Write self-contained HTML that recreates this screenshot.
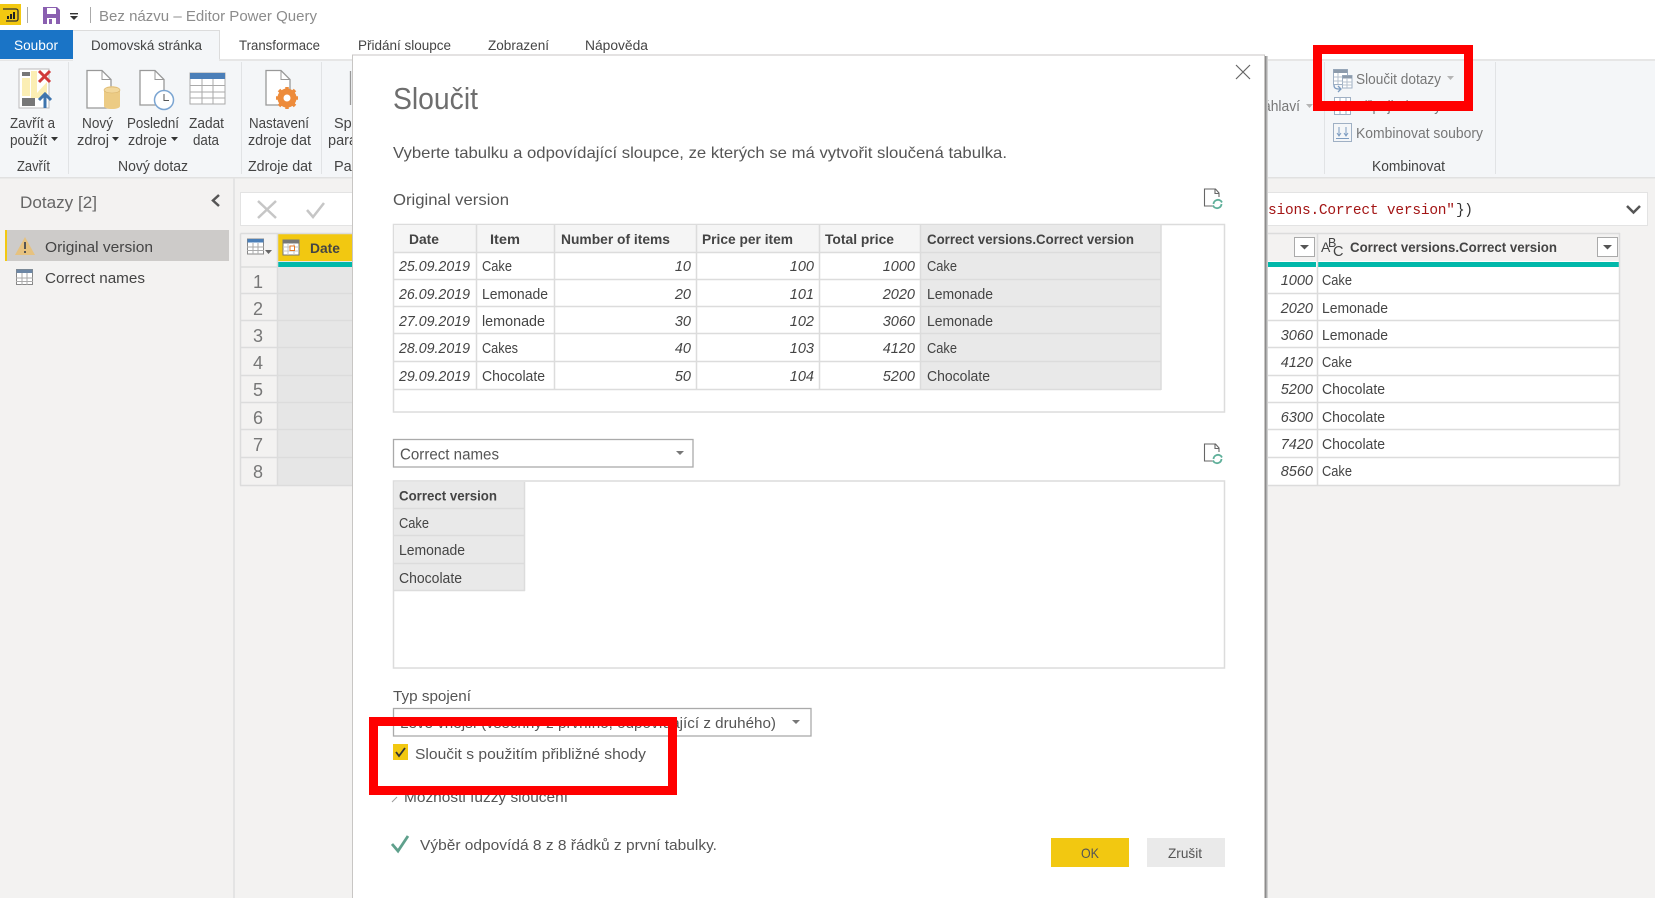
<!DOCTYPE html>
<html lang="cs"><head><meta charset="utf-8"><title>Sloučit</title>
<style>
html,body{margin:0;padding:0;width:1655px;height:898px;overflow:hidden;background:#f3f2f1}
svg{display:block;filter:blur(.35px)}
text{font-family:"Liberation Sans",sans-serif;font-size:14.5px;fill:#444;white-space:pre}
.b{font-weight:bold;font-size:14px;fill:#444}
.i{font-style:italic;font-size:14.5px;fill:#444}
.r{text-anchor:end}
.g{fill:#777}
.n{font-size:18px;fill:#777;text-anchor:middle}
.m{font-family:"Liberation Mono",monospace;font-size:14.5px;fill:#a31515}
.l{stroke:#dcdcdc;stroke-width:1.5;fill:none}
</style></head><body>
<svg width="1655" height="898" viewBox="0 0 1655 898" xmlns="http://www.w3.org/2000/svg">
<rect width="1655" height="898" fill="#f3f2f1"/>
<!-- title bar -->
<rect width="1655" height="59" fill="#fff"/>
<rect x="0" y="4" width="21" height="21" fill="#f2c811"/>
<path d="M3 9h13a2 2 0 0 1 2 2v8a2 2 0 0 1-2 2h-10" fill="none" stroke="#333" stroke-width="1.3"/>
<path d="M7 19v-3h2v3zM10 19v-5h2v5zM13 19v-7h2v7z" fill="#222"/>
<rect x="27" y="7" width="1" height="16" fill="#aaa"/>
<path d="M43 7h14l3 3v14H43z" fill="#8a5fb0"/><rect x="47" y="8" width="9" height="6" fill="#fff"/><rect x="47" y="18" width="9" height="6" fill="#fff"/><rect x="49" y="19" width="3" height="5" fill="#8a5fb0"/>
<rect x="70" y="13" width="8" height="1.4" fill="#333"/><path d="M70 16h8l-4 4z" fill="#333"/>
<rect x="90" y="7" width="1" height="16" fill="#aaa"/>
<text x="99" y="21" textLength="218" lengthAdjust="spacingAndGlyphs" style="font-size:15px;fill:#8c8c8c">Bez názvu – Editor Power Query</text>
<!-- tabs -->
<rect x="0" y="30" width="73" height="29" fill="#1a74c6"/>
<text x="14" y="50" textLength="44" lengthAdjust="spacingAndGlyphs" style="fill:#fff;font-size:13.5px">Soubor</text>
<rect x="73" y="30" width="146" height="31" fill="#f4f6f8"/><path d="M73 30.500H219.500V60" fill="none" stroke="#dcdcdc"/>
<text x="91" y="50" textLength="111" lengthAdjust="spacingAndGlyphs" style="font-size:13.500px">Domovská stránka</text>
<text x="239" y="50" textLength="81" lengthAdjust="spacingAndGlyphs" style="font-size:13.5px">Transformace</text>
<text x="358" y="50" textLength="93" lengthAdjust="spacingAndGlyphs" style="font-size:13.5px">Přidání sloupce</text>
<text x="488" y="50" textLength="61" lengthAdjust="spacingAndGlyphs" style="font-size:13.5px">Zobrazení</text>
<text x="585" y="50" textLength="63" lengthAdjust="spacingAndGlyphs" style="font-size:13.5px">Nápověda</text>
<!-- ribbon -->
<rect x="219" y="59" width="1436" height="2" fill="#e6e6e6"/>
<rect x="0" y="60" width="73" height="2" fill="#e6e6e6"/>
<rect x="0" y="61" width="1655" height="116" fill="#f4f6f8"/>
<rect x="73" y="59" width="146" height="3" fill="#f4f6f8"/>
<rect x="0" y="177" width="1655" height="1.500" fill="#e1e1e1"/>
<g fill="#e1e3e5"><rect x="68" y="62" width="1" height="112"/><rect x="241" y="62" width="1" height="112"/><rect x="321" y="62" width="1" height="112"/><rect x="1324" y="62" width="1" height="112"/><rect x="1495" y="62" width="1" height="112"/></g>
<!-- close&apply icon -->
<rect x="19" y="69" width="30" height="39" fill="#fff" stroke="#bbb"/>
<path d="M31 71h6v22l10-11v16H31z" fill="#fbeeb4"/><rect x="22" y="72" width="8" height="4" fill="#777"/><rect x="22" y="98" width="13" height="8" fill="#777"/><rect x="22" y="78" width="8" height="18" fill="#fbeeb4"/>
<path d="M39 71l11 11M50 71L39 82" stroke="#d13a3a" stroke-width="3" fill="none"/>
<path d="M45 108V96M39 100l6-6 6 6" stroke="#3f75ae" stroke-width="3" fill="none"/>
<!-- new -->
<path d="M87 70.500h15l9 9V108H87z" fill="#fff" stroke="#999" stroke-width="1.300"/><path d="M102 70.500v9h9" fill="none" stroke="#999"/>
<path d="M104 90c0-5 16-5 16 0v16c0 4-16 4-16 0z" fill="#eccb84"/><ellipse cx="112" cy="90" rx="8" ry="3" fill="#f2d89d" stroke="#d8b26a" stroke-width=".6"/>
<!-- recent -->
<path d="M140 70.500h15l9 9V105h-24z" fill="#fff" stroke="#999" stroke-width="1.300"/><path d="M155 70.500v9h9" fill="none" stroke="#999"/>
<circle cx="164" cy="100" r="9.500" fill="#fff" stroke="#7ba5d2" stroke-width="1.500"/><path d="M164 94v6.500h5" fill="none" stroke="#555" stroke-width="1"/>
<!-- enter data -->
<rect x="190" y="73" width="35" height="31" fill="#fff" stroke="#aaa"/><rect x="190" y="73" width="35" height="6" fill="#4b7fb8"/>
<path d="M190 85.500h35M190 92h35M190 98h35M202 79v25M213 79v25" stroke="#aaa" fill="none"/>
<!-- settings -->
<path d="M266 70.500h15l9 9V105h-24z" fill="#fff" stroke="#999" stroke-width="1.300"/><path d="M281 70.500v9h9" fill="none" stroke="#999"/>
<circle cx="287" cy="98" r="7" fill="none" stroke="#ed8b3b" stroke-width="5"/>
<path d="M287 87v22M276 98h22M279 90l16 16M295 90l-16 16" stroke="#ed8b3b" stroke-width="3.500" fill="none"/><circle cx="287" cy="98" r="3.500" fill="#fff"/>
<path d="M350.500 71V105" stroke="#999" stroke-width="1.300"/>
<!-- ribbon labels -->
<g style="font-size:14px">
<text x="10" y="128" textLength="45" lengthAdjust="spacingAndGlyphs">Zavřít a</text>
<text x="10" y="145" textLength="37" lengthAdjust="spacingAndGlyphs">použít</text>
<text x="82" y="128" textLength="31" lengthAdjust="spacingAndGlyphs">Nový</text>
<text x="77" y="145" textLength="32" lengthAdjust="spacingAndGlyphs">zdroj</text>
<text x="127" y="128" textLength="52" lengthAdjust="spacingAndGlyphs">Poslední</text>
<text x="128" y="145" textLength="39" lengthAdjust="spacingAndGlyphs">zdroje</text>
<text x="189" y="128" textLength="35" lengthAdjust="spacingAndGlyphs">Zadat</text>
<text x="193" y="145" textLength="26" lengthAdjust="spacingAndGlyphs">data</text>
<text x="249" y="128" textLength="60" lengthAdjust="spacingAndGlyphs">Nastavení</text>
<text x="248" y="145" textLength="63" lengthAdjust="spacingAndGlyphs">zdroje dat</text>
<text x="334" y="128">Spr</text>
<text x="328" y="145">para</text>
<text x="17" y="171" textLength="33" lengthAdjust="spacingAndGlyphs">Zavřít</text>
<text x="118" y="171" textLength="70" lengthAdjust="spacingAndGlyphs">Nový dotaz</text>
<text x="248" y="171" textLength="64" lengthAdjust="spacingAndGlyphs">Zdroje dat</text>
<text x="334" y="171">Par</text>
<text x="1372" y="171" textLength="73" lengthAdjust="spacingAndGlyphs">Kombinovat</text>
<text x="1263" y="111" textLength="37" lengthAdjust="spacingAndGlyphs" class="g">áhlaví</text>
<text x="1356" y="84" textLength="85" lengthAdjust="spacingAndGlyphs" class="g">Sloučit dotazy</text>
<text x="1356" y="138" textLength="127" lengthAdjust="spacingAndGlyphs" class="g">Kombinovat soubory</text>
<text x="1356" y="111" textLength="85" lengthAdjust="spacingAndGlyphs" class="g">Připojit dotazy</text>
</g>
<g fill="#333"><path d="M51 137h7l-3.500 4zM112 137h7l-3.500 4zM171 137h7l-3.500 4z"/></g>
<g fill="#b5b5b5"><path d="M1447 76h7l-3.500 4zM1306 104h7l-3.500 4z"/></g>
<!-- merge icon -->
<rect x="1333.500" y="69.500" width="14" height="15" fill="#fff" stroke="#9fb0c4"/><rect x="1333.500" y="69.500" width="14" height="3.500" fill="#8d9bab"/>
<path d="M1334 77h8M1334 81h8M1338 73v11" stroke="#b5c0cd"/>
<rect x="1342.500" y="75.500" width="9.500" height="12.500" fill="#fff" stroke="#9fb0c4"/><rect x="1342.500" y="75.500" width="9.500" height="3" fill="#8d9bab"/>
<path d="M1342 82h10M1342 85h10M1347 78v10" stroke="#b5c0cd"/>
<path d="M1334 85c0 3.500 2 4 6 4M1338 86l3 3-3 3" fill="none" stroke="#7d9cc0" stroke-width="1.300"/>
<rect x="1334.500" y="97.500" width="16" height="17" fill="#fff" stroke="#9fb0c4"/><path d="M1334 103h17M1340 97v18M1346 97v18" stroke="#9fb0c4"/>
<rect x="1333.500" y="123.500" width="18" height="18" fill="#f4f6f8" stroke="#9fb0c4"/><path d="M1339 127v9M1337 133l2 3 2-3M1346 127v9M1344 133l2 3 2-3M1336 138.500h13" fill="none" stroke="#7d9cc0"/>
<!-- queries panel -->
<rect x="233" y="178" width="2" height="720" fill="#e4e4e4"/>
<text x="20" y="208" textLength="77" lengthAdjust="spacingAndGlyphs" style="font-size:17px;fill:#666">Dotazy [2]</text>
<path d="M219 195l-6 5.500 6 5.500" fill="none" stroke="#555" stroke-width="2.500"/>
<rect x="5" y="230" width="224" height="31" fill="#cdcbc9"/><rect x="5" y="230" width="2" height="31" fill="#f2c811"/>
<path d="M15 255l10-18 10 18z" fill="#e6c27f"/><rect x="24" y="242" width="2" height="7" fill="#555"/><rect x="24" y="251" width="2" height="2" fill="#555"/>
<text x="45" y="252" textLength="108" lengthAdjust="spacingAndGlyphs" style="font-size:15px">Original version</text>
<rect x="16.500" y="269.500" width="16" height="15" fill="#fff" stroke="#888"/><rect x="16.500" y="269.500" width="16" height="3.500" fill="#6d87a5"/><path d="M16 278h17M16 281.500h17M22 273v12M27 273v12" stroke="#aaa"/>
<text x="45" y="283" textLength="100" lengthAdjust="spacingAndGlyphs" style="font-size:15px">Correct names</text>
<!-- formula bar -->
<rect x="240.500" y="192.500" width="1407" height="33" fill="#fff" stroke="#e3e3e3"/>
<path d="M258 201l18 17M276 201l-18 17" stroke="#c6c6c6" stroke-width="2.500" fill="none"/>
<path d="M307 210l6 7 11-14" stroke="#c6c6c6" stroke-width="2.500" fill="none"/>
<text x="1259.500" y="214" class="m" textLength="195.500" lengthAdjust="spacing">rsions.Correct version"</text>
<text x="1456" y="214" class="m" style="fill:#333" textLength="17" lengthAdjust="spacing">})</text>
<path d="M1627 206l6.500 6.500 6.500-6.500" stroke="#555" stroke-width="2.500" fill="none"/>
<!-- grid -->
<rect x="240" y="233" width="1380" height="252" fill="#fff"/>
<rect x="240" y="233" width="38" height="252" fill="#f3f2f1"/>
<rect x="278" y="261" width="987" height="224" fill="#e6e6e6"/>
<rect x="1265" y="233" width="355" height="28" fill="#f3f2f1"/>
<rect x="278" y="234" width="74" height="27" fill="#f2c811"/>
<rect x="278" y="262" width="74" height="5" fill="#01b8aa"/>
<rect x="1265" y="262" width="355" height="5" fill="#01b8aa"/>
<rect x="1316" y="262" width="1.500" height="5" fill="#fff"/>
<path d="M240.500 233.500H1620M240.500 233.500V485.500M277.500 233V485.500M240 267H277M240 293.500H1620M240 320.500H1620M240 347.500H1620M240 375.500H1620M240 402.500H1620M240 429.500H1620M240 457.500H1620M240 485.500H1620M1619.500 233V485.500M1317.500 233V485.500" class="l"/>
<rect x="247.500" y="239" width="16" height="15" fill="#fff" stroke="#888"/><rect x="247.500" y="239" width="16" height="3.500" fill="#4b7fb8"/><path d="M247 247h17M247 250.500h17M253 243v11M258 243v11" stroke="#aaa"/><path d="M265 250h7l-3.500 4z" fill="#666"/>
<rect x="283" y="240" width="16" height="15" fill="#fff" stroke="#777"/><rect x="283" y="240" width="16" height="3.500" fill="#777"/><path d="M283 247h16M283 251h16M288 243v12M294 243v12" stroke="#c4c4c4"/><rect x="290" y="246" width="4.500" height="4.500" fill="#fff" stroke="#e87722"/>
<text x="310" y="253" class="b" textLength="30" lengthAdjust="spacingAndGlyphs">Date</text>
<g>
<text x="258" y="288" class="n">1</text><text x="258" y="315" class="n">2</text><text x="258" y="342" class="n">3</text><text x="258" y="369" class="n">4</text><text x="258" y="396" class="n">5</text><text x="258" y="424" class="n">6</text><text x="258" y="451" class="n">7</text><text x="258" y="478" class="n">8</text>
</g>
<rect x="1294.500" y="237.500" width="20" height="19" fill="#fff" stroke="#aaa"/><path d="M1300 245h9l-4.500 4.500z" fill="#555"/>
<rect x="1597.500" y="237.500" width="20" height="19" fill="#fff" stroke="#aaa"/><path d="M1603 245h9l-4.500 4.500z" fill="#555"/>
<text x="1321" y="252" style="font-size:14px;fill:#444">A</text><text x="1328" y="247" style="font-size:12.500px;fill:#444">B</text><text x="1333" y="256" style="font-size:14.500px;fill:#444">C</text>
<text x="1350" y="252" class="b" textLength="207" lengthAdjust="spacingAndGlyphs">Correct versions.Correct version</text>
<g>
<text x="1313" y="285" class="i r">1000</text><text x="1322" y="285" textLength="30" lengthAdjust="spacingAndGlyphs">Cake</text>
<text x="1313" y="313" class="i r">2020</text><text x="1322" y="313" textLength="66" lengthAdjust="spacingAndGlyphs">Lemonade</text>
<text x="1313" y="340" class="i r">3060</text><text x="1322" y="340" textLength="66" lengthAdjust="spacingAndGlyphs">Lemonade</text>
<text x="1313" y="367" class="i r">4120</text><text x="1322" y="367" textLength="30" lengthAdjust="spacingAndGlyphs">Cake</text>
<text x="1313" y="394" class="i r">5200</text><text x="1322" y="394" textLength="63" lengthAdjust="spacingAndGlyphs">Chocolate</text>
<text x="1313" y="422" class="i r">6300</text><text x="1322" y="422" textLength="63" lengthAdjust="spacingAndGlyphs">Chocolate</text>
<text x="1313" y="449" class="i r">7420</text><text x="1322" y="449" textLength="63" lengthAdjust="spacingAndGlyphs">Chocolate</text>
<text x="1313" y="476" class="i r">8560</text><text x="1322" y="476" textLength="30" lengthAdjust="spacingAndGlyphs">Cake</text>
</g>
<!-- dialog -->
<rect x="1264" y="56" width="2.500" height="842" fill="#8c8c8c"/><rect x="1266.500" y="56" width="1.500" height="842" fill="#cfcfcf"/>
<rect x="352.500" y="55" width="912" height="850" fill="#fff" stroke="#c8c6c4"/>
<path d="M1236 65l14 14M1250 65l-14 14" stroke="#666" stroke-width="1.200" fill="none"/>
<text x="393" y="109" textLength="85" lengthAdjust="spacingAndGlyphs" style="font-size:31px;fill:#6e6e6e">Sloučit</text>
<text x="393" y="158" textLength="614" lengthAdjust="spacingAndGlyphs" style="font-size:16px;fill:#555">Vyberte tabulku a odpovídající sloupce, ze kterých se má vytvořit sloučená tabulka.</text>
<text x="393" y="205" textLength="116" lengthAdjust="spacingAndGlyphs" style="font-size:16px;fill:#555">Original version</text>
<g transform="translate(0,1)"><path d="M1213 205h-8.500v-17h11l3.500 4v4M1215 188v4.500h4" fill="none" stroke="#666" stroke-width="1.100"/><path d="M1213.500 203a4.500 4.500 0 0 1 7.500-3l1 1.500M1221.500 203a4.500 4.500 0 0 1-7.500 3l-1-1.500" fill="none" stroke="#5fb09a" stroke-width="1.800"/></g>
<g transform="translate(0,256)"><path d="M1213 205h-8.500v-17h11l3.500 4v4M1215 188v4.500h4" fill="none" stroke="#666" stroke-width="1.100"/><path d="M1213.500 203a4.500 4.500 0 0 1 7.500-3l1 1.500M1221.500 203a4.500 4.500 0 0 1-7.500 3l-1-1.500" fill="none" stroke="#5fb09a" stroke-width="1.800"/></g>
<!-- table 1 -->
<rect x="393.500" y="224.500" width="831" height="187.500" fill="#fff" stroke="#dcdcdc" stroke-width="1.500"/>
<rect x="394" y="225" width="526" height="27" fill="#f5f5f5"/>
<rect x="921" y="225" width="240" height="165" fill="#e9e9e9"/>
<path d="M393 252.500H1161M393 279.500H1161M393 306.500H1161M393 333.500H1161M393 361.500H1161M393 389.500H1161M476.500 225V389M554.500 225V389M696.500 225V389M819.500 225V389M920.500 225V389M1161 225V390" class="l"/>
<g>
<text x="409" y="244" class="b" textLength="30" lengthAdjust="spacingAndGlyphs">Date</text>
<text x="490" y="244" class="b" textLength="30" lengthAdjust="spacingAndGlyphs">Item</text>
<text x="561" y="244" class="b" textLength="109" lengthAdjust="spacingAndGlyphs">Number of items</text>
<text x="702" y="244" class="b" textLength="91" lengthAdjust="spacingAndGlyphs">Price per item</text>
<text x="825" y="244" class="b" textLength="69" lengthAdjust="spacingAndGlyphs">Total price</text>
<text x="927" y="244" class="b" textLength="207" lengthAdjust="spacingAndGlyphs">Correct versions.Correct version</text>
<text x="399" y="271" class="i" textLength="71" lengthAdjust="spacingAndGlyphs">25.09.2019</text><text x="482" y="271" textLength="30" lengthAdjust="spacingAndGlyphs">Cake</text><text x="691" y="271" class="i r">10</text><text x="814" y="271" class="i r">100</text><text x="915" y="271" class="i r">1000</text><text x="927" y="271" textLength="30" lengthAdjust="spacingAndGlyphs">Cake</text>
<text x="399" y="299" class="i" textLength="71" lengthAdjust="spacingAndGlyphs">26.09.2019</text><text x="482" y="299" textLength="66" lengthAdjust="spacingAndGlyphs">Lemonade</text><text x="691" y="299" class="i r">20</text><text x="814" y="299" class="i r">101</text><text x="915" y="299" class="i r">2020</text><text x="927" y="299" textLength="66" lengthAdjust="spacingAndGlyphs">Lemonade</text>
<text x="399" y="326" class="i" textLength="71" lengthAdjust="spacingAndGlyphs">27.09.2019</text><text x="482" y="326" textLength="63" lengthAdjust="spacingAndGlyphs">lemonade</text><text x="691" y="326" class="i r">30</text><text x="814" y="326" class="i r">102</text><text x="915" y="326" class="i r">3060</text><text x="927" y="326" textLength="66" lengthAdjust="spacingAndGlyphs">Lemonade</text>
<text x="399" y="353" class="i" textLength="71" lengthAdjust="spacingAndGlyphs">28.09.2019</text><text x="482" y="353" textLength="36" lengthAdjust="spacingAndGlyphs">Cakes</text><text x="691" y="353" class="i r">40</text><text x="814" y="353" class="i r">103</text><text x="915" y="353" class="i r">4120</text><text x="927" y="353" textLength="30" lengthAdjust="spacingAndGlyphs">Cake</text>
<text x="399" y="381" class="i" textLength="71" lengthAdjust="spacingAndGlyphs">29.09.2019</text><text x="482" y="381" textLength="63" lengthAdjust="spacingAndGlyphs">Chocolate</text><text x="691" y="381" class="i r">50</text><text x="814" y="381" class="i r">104</text><text x="915" y="381" class="i r">5200</text><text x="927" y="381" textLength="63" lengthAdjust="spacingAndGlyphs">Chocolate</text>
</g>
<!-- dropdown -->
<rect x="393.500" y="439.500" width="299.500" height="27.500" fill="#fff" stroke="#aaa" stroke-width="1.300"/>
<text x="400" y="459.500" textLength="99" lengthAdjust="spacingAndGlyphs" style="font-size:15.5px;fill:#555">Correct names</text>
<path d="M676 451h8l-4 4z" fill="#777"/>
<!-- table 2 -->
<rect x="393.500" y="481" width="831" height="187" fill="#fff" stroke="#dcdcdc" stroke-width="1.500"/>
<rect x="394" y="482" width="131" height="109" fill="#e9e9e9"/>
<path d="M394 508.500H525M394 535.500H525M394 563.500H525M394 590.500H525M524.500 482V591" class="l"/>
<text x="399" y="500.500" class="b" textLength="98" lengthAdjust="spacingAndGlyphs">Correct version</text>
<text x="399" y="528" textLength="30" lengthAdjust="spacingAndGlyphs">Cake</text>
<text x="399" y="555" textLength="66" lengthAdjust="spacingAndGlyphs">Lemonade</text>
<text x="399" y="583" textLength="63" lengthAdjust="spacingAndGlyphs">Chocolate</text>
<!-- join -->
<text x="393" y="701" textLength="78" lengthAdjust="spacingAndGlyphs" style="font-size:15px;fill:#555">Typ spojení</text>
<rect x="393.500" y="708.500" width="417.500" height="27.500" fill="#fff" stroke="#aaa" stroke-width="1.300"/>
<text x="400" y="728" textLength="376" lengthAdjust="spacingAndGlyphs" style="font-size:15px;fill:#555">Levé vnější (všechny z prvního, odpovídající z druhého)</text>
<path d="M792 720h8l-4 4z" fill="#777"/>
<rect x="393" y="744" width="15" height="16" fill="#f2c811"/>
<path d="M396 752l3 4 6-8" stroke="#333" stroke-width="1.800" fill="none"/>
<text x="415" y="759" textLength="231" lengthAdjust="spacingAndGlyphs" style="font-size:15px;fill:#555">Sloučit s použitím přibližné shody</text>
<path d="M392 802l5-5" stroke="#999" fill="none"/>
<text x="404" y="802" textLength="164" lengthAdjust="spacingAndGlyphs" style="font-size:15px;fill:#555">Možnosti fuzzy sloučení</text>
<path d="M392 844l6 7 10-15" stroke="#5fa08c" stroke-width="2.800" fill="none"/>
<text x="420" y="850" textLength="297" lengthAdjust="spacingAndGlyphs" style="font-size:15px;fill:#555">Výběr odpovídá 8 z 8 řádků z první tabulky.</text>
<rect x="1051" y="838" width="78" height="29" fill="#f2c811"/>
<text x="1081" y="858" textLength="18" lengthAdjust="spacingAndGlyphs" style="font-size:14px;fill:#555">OK</text>
<rect x="1147" y="838" width="78" height="29" fill="#eaeaea"/>
<text x="1168" y="858" textLength="34" lengthAdjust="spacingAndGlyphs" style="font-size:14px;fill:#555">Zrušit</text>
<!-- red highlight boxes -->
<path d="M1313 45h160v66H1313zM1322 54v47h142V54z" fill="#f00" fill-rule="evenodd"/>
<path d="M369 717h308v78H369zM378 726v60h290V726z" fill="#f00" fill-rule="evenodd"/>
</svg>
</body></html>
